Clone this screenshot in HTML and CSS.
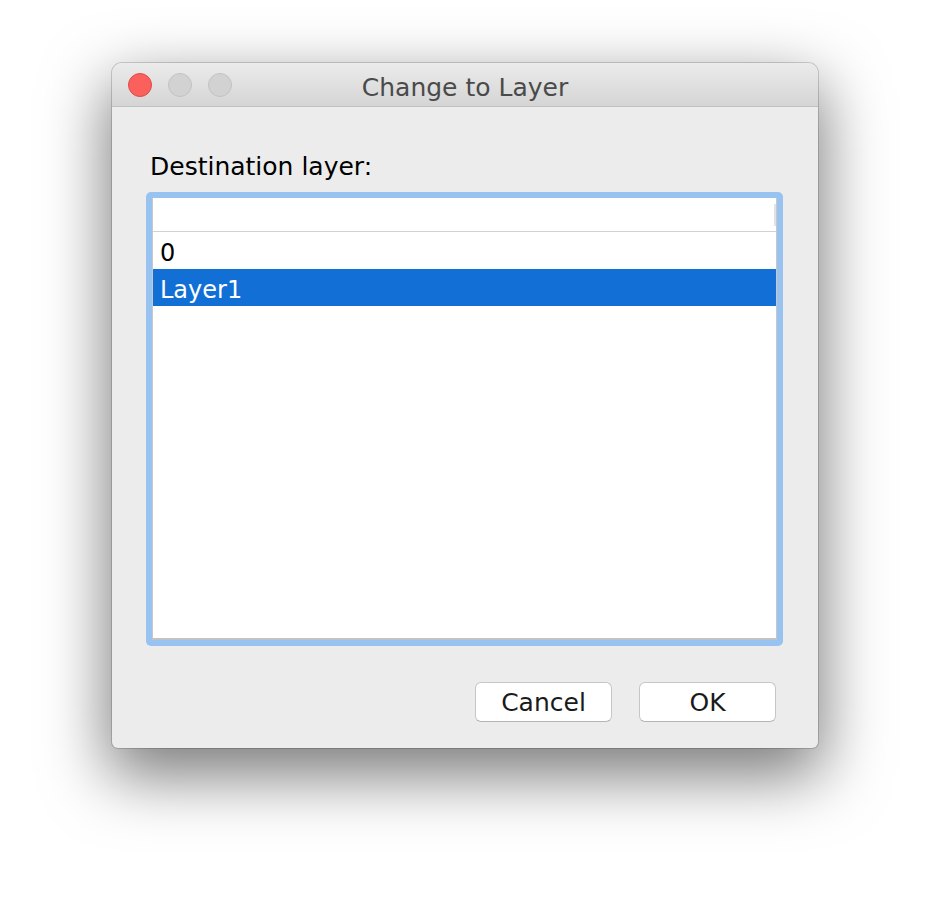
FILE: index.html
```html
<!DOCTYPE html>
<html lang="en">

<head>
    <meta charset="UTF-8">
    <meta name="viewport" content="width=device-width, initial-scale=1.0">
    <title>Change to Layer</title>
    <link rel="stylesheet" href="styles.css">
</head>

<body>

    <div class="window">
        <div class="titlebar">
            <div class="lights">
                <span class="light close"></span>
                <span class="light"></span>
                <span class="light"></span>
            </div>
            <div class="title">Change to Layer</div>
            <div></div>
        </div>

        <div class="content">
            <label class="label">Destination layer:</label>

            <div class="focus-ring">
                <div class="list">
                    <div class="list-header"><span class="header-edge"></span></div>
                    <div class="row">0</div>
                    <div class="row selected">Layer1</div>
                </div>
            </div>

            <div class="buttons">
                <button class="btn">Cancel</button>
                <button class="btn">OK</button>
            </div>
        </div>
    </div>

</body>

</html>
```

FILE: styles.css
```css
body {
    background-color: #fff;
    margin: 0;
    padding: 63px 0 0 112px;
    min-height: 100vh;
    box-sizing: border-box;
    font-family: "DejaVu Sans", "Liberation Sans", sans-serif;
}

.window {
    width: 706px;
    height: 685px;
    background-color: #ececec;
    border-radius: 10px 10px 6px 6px;
    box-shadow: 0 0 0 1px rgba(0, 0, 0, 0.16), 0 24px 64px 4px rgba(0, 0, 0, 0.52);
    overflow: hidden;
    display: flex;
    flex-direction: column;
}

.titlebar {
    height: 43px;
    border-bottom: 1px solid #c1c1c1;
    background: linear-gradient(#ebebeb, #d5d5d5);
    display: grid;
    grid-template-columns: 1fr auto 1fr;
    align-items: center;
}

.lights {
    display: flex;
    gap: 16px;
    padding-left: 16px;
}

.light {
    width: 22px;
    height: 22px;
    border-radius: 50%;
    background-color: #d2d2d2;
    border: 1px solid #c2c2c2;
}

.light.close {
    background-color: #fc605c;
    border-color: #de4a46;
}

.title {
    font-size: 25px;
    color: #4a4a4a;
    padding-top: 5px;
}

.content {
    flex: 1;
    padding: 45px 35px 0 34px;
    display: flex;
    flex-direction: column;
}

.label {
    font-size: 25px;
    color: #000;
    padding-left: 4px;
    line-height: 30px;
    margin-bottom: 10px;
}

.focus-ring {
    height: 454px;
    padding: 6px;
    background-color: #98c2f0;
    border-radius: 5px;
    box-sizing: border-box;
}

.list {
    height: 100%;
    background-color: #fff;
    border-left: 1px solid #c8c8c8;
    border-right: 1px solid #c8c8c8;
    border-bottom: 2px solid #c2c2c2;
    box-sizing: border-box;
}

.list-header {
    height: 33px;
    border-bottom: 1px solid #d2d2d2;
    display: flex;
    justify-content: flex-end;
    align-items: center;
}

.header-edge {
    width: 2px;
    height: 22px;
    background-color: #e2e2e2;
}

.row {
    height: 37px;
    line-height: 42px;
    padding-left: 7px;
    font-size: 24px;
    color: #000;
}

.row.selected {
    background-color: #126fd6;
    color: #fff;
}

.buttons {
    display: flex;
    justify-content: flex-end;
    gap: 27px;
    margin-top: 36px;
    padding-right: 7px;
}

.btn {
    width: 137px;
    height: 40px;
    background-color: #fff;
    border: 1px solid #c6c6c6;
    border-bottom-color: #b4b4b4;
    border-radius: 6px;
    font-family: "DejaVu Sans", "Liberation Sans", sans-serif;
    font-size: 25px;
    color: #1a1a1a;
    padding: 0;
}
```
